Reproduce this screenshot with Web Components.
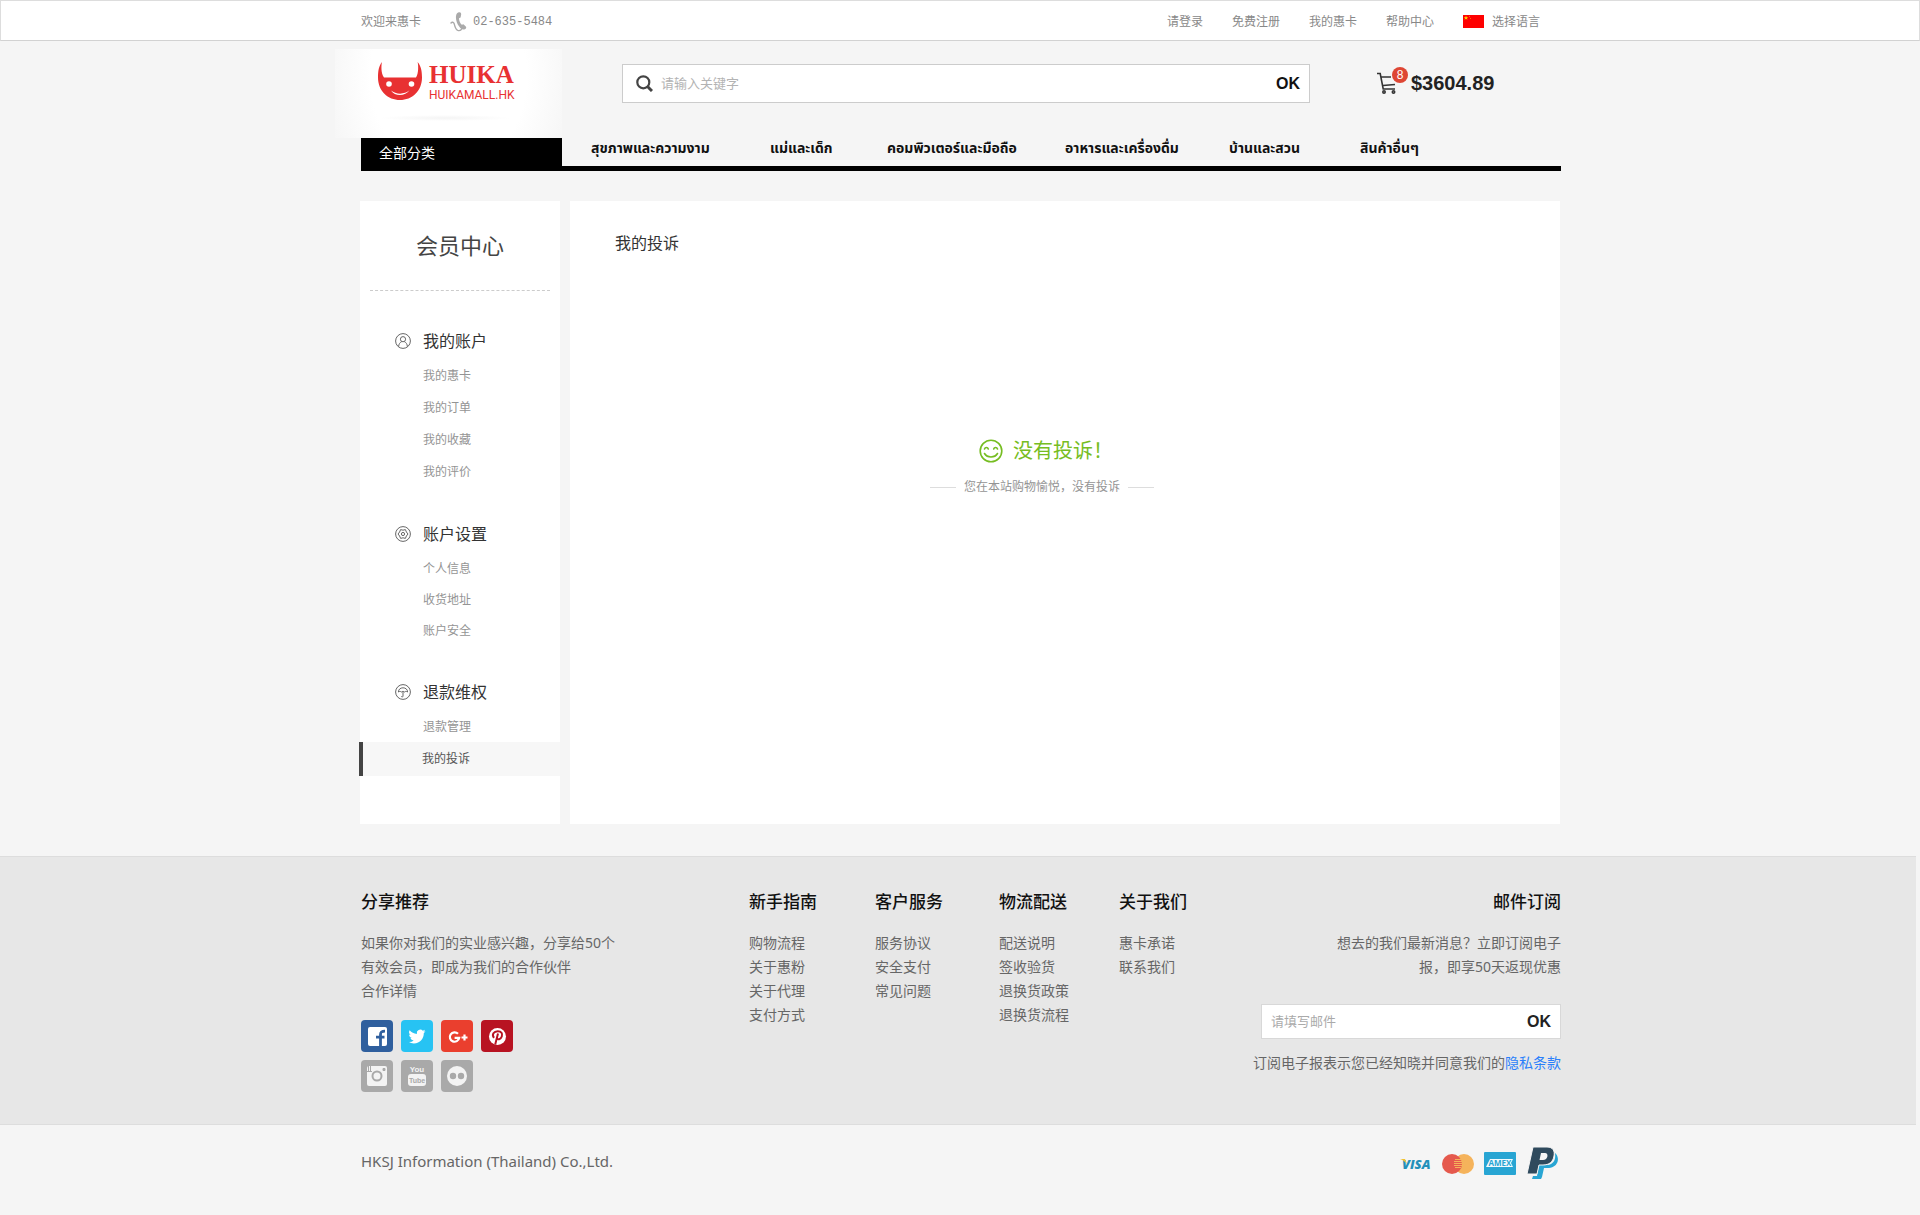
<!DOCTYPE html>
<html lang="zh-CN">
<head>
<meta charset="utf-8">
<meta name="viewport" content="width=device-width, initial-scale=1">
<title>我的投诉 - HUIKA</title>
<style>
  :root {
    --page: #f5f5f5;
    --wrap: 1200px;
    --muted: #949494;
    --text: #666;
    --dark: #333;
    --cjk: "Noto Sans", "Noto Sans CJK SC", sans-serif;
  }
  body { margin: 0; background: var(--page); font: 14px/24px var(--cjk); color: var(--text); }
  a { color: inherit; text-decoration: none; }
</style>
</head>
<body>
<hk-page>
  <hk-topbar slot="top"></hk-topbar>
  <hk-header slot="header"></hk-header>
  <hk-nav slot="header"></hk-nav>

  <hk-side-menu slot="side" heading="会员中心">
    <hk-menu-group heading="我的账户" style="--row:32px">
      <svg slot="icon" viewBox="0 0 16 16"><circle cx="8" cy="8" r="7.4"/><circle cx="8" cy="6.2" r="2.6"/><path d="M3.6 13.6c.2-2.6 1.4-4.2 3-4.9M12.4 13.6c-.2-2.6-1.4-4.2-3-4.9"/></svg>
      <hk-menu-item>我的惠卡</hk-menu-item>
      <hk-menu-item>我的订单</hk-menu-item>
      <hk-menu-item>我的收藏</hk-menu-item>
      <hk-menu-item>我的评价</hk-menu-item>
    </hk-menu-group>
    <hk-menu-group heading="账户设置">
      <svg slot="icon" viewBox="0 0 16 16"><circle cx="8" cy="8" r="7.4"/><path d="M5.6 3.6 8 4.2l2.4-.6 1 2.4L13 8l-1.600 2-1 2.400-2.400-.6-2.400.6-1-2.400L3 8l1.600-2z"/><circle cx="8" cy="8" r="1.600"/></svg>
      <hk-menu-item>个人信息</hk-menu-item>
      <hk-menu-item>收货地址</hk-menu-item>
      <hk-menu-item>账户安全</hk-menu-item>
    </hk-menu-group>
    <hk-menu-group heading="退款维权">
      <svg slot="icon" viewBox="0 0 16 16"><circle cx="8" cy="8" r="7.4"/><path d="M3.400 8c0-2.600 2-4.200 4.600-4.200s4.600 1.600 4.600 4.200c-1.400-.8-2.200-.8-3 0-1-.8-2.200-.8-3.200 0-1-.8-2-.8-3 0zM8 7.600v4.600c0 1-1.600 1-1.600 0"/></svg>
      <hk-menu-item>退款管理</hk-menu-item>
      <hk-menu-item active>我的投诉</hk-menu-item>
    </hk-menu-group>
  </hk-side-menu>

  <hk-panel heading="我的投诉">
    <hk-empty-state>
      <span slot="title">没有投诉！</span>
      您在本站购物愉悦，没有投诉
    </hk-empty-state>
  </hk-panel>

  <hk-footer slot="footer">
    <hk-footer-column heading="分享推荐">
      <p>如果你对我们的实业感兴趣，分享给50个<br>有效会员，即成为我们的合作伙伴<br><a href="#">合作详情</a></p>
      <hk-social></hk-social>
    </hk-footer-column>
    <hk-footer-column heading="新手指南"><a href="#">购物流程</a><a href="#">关于惠粉</a><a href="#">关于代理</a><a href="#">支付方式</a></hk-footer-column>
    <hk-footer-column heading="客户服务"><a href="#">服务协议</a><a href="#">安全支付</a><a href="#">常见问题</a></hk-footer-column>
    <hk-footer-column heading="物流配送"><a href="#">配送说明</a><a href="#">签收验货</a><a href="#">退换货政策</a><a href="#">退换货流程</a></hk-footer-column>
    <hk-footer-column heading="关于我们"><a href="#">惠卡承诺</a><a href="#">联系我们</a></hk-footer-column>
    <hk-footer-column heading="邮件订阅" end>
      <p>想去的我们最新消息？立即订阅电子<br>报，即享50天返现优惠</p>
      <hk-subscribe></hk-subscribe>
    </hk-footer-column>
  </hk-footer>
  <hk-legal slot="footer"></hk-legal>
</hk-page>

<script>
const base = `*{box-sizing:border-box}a{color:inherit;text-decoration:none}button{font:inherit;color:inherit;background:none;border:0;padding:0;cursor:pointer}svg{display:block}`;

function define(name, render) {
  customElements.define(name, class extends HTMLElement {
    constructor() {
      super();
      this.attachShadow({ mode: 'open' });
    }
    connectedCallback() {
      const template = document.createElement('template');
      template.innerHTML = `<style>${base}</style>` + render(this);
      this.shadowRoot.replaceChildren(template.content.cloneNode(true));
    }
  });
}

define('hk-page', () => `
<style>
  :host { display: block; }
  .wrap { max-width: var(--wrap); margin: 0 auto; }
  header { padding-left: 2px; }
  main { padding: 30px 0 32px; }
  .grid { display: grid; grid-template-columns: 200px minmax(0, 1fr); gap: 10px; }
</style>
<slot name="top"></slot>
<header><div class="wrap"><slot name="header"></slot></div></header>
<main><div class="wrap grid"><slot name="side"></slot><slot></slot></div></main>
<footer><slot name="footer"></slot></footer>`);

define('hk-topbar', () => `
<style>
  :host { display: block; background: #fff; border: 1px solid #ddd; border-bottom-color: #d2d2d2; font-size: 12px; color: #888; box-sizing: border-box; height: 41px; padding-left: 2px; }
  .row, .group, nav, .lang { display: flex; align-items: center; }
  .row { max-width: var(--wrap); height: 39px; margin: 0 auto; padding: 2px 21px 0 0; justify-content: space-between; }
  .group { gap: 29px; }
  .phone { display: flex; align-items: center; gap: 6px; font: 12px/24px "Liberation Mono", monospace; }
  nav { gap: 29px; }
  .lang { gap: 8px; }
</style>
<div class="row">
  <div class="group">
    <span>欢迎来惠卡</span>
    <a class="phone" href="tel:026355484">
      <svg width="17" height="20" viewBox="0 0 17 20"><path d="M8.200.6c2-.9 3 .3 3 1.700l-.6 3.100-1.600.8c0 2.600 1 4.800 2.800 6.600l1.600-.6 2.400 2.200c.8 1 .4 2.300-1 2.900-2 .8-4-.3-5.800-3C7 11.500 5.600 7.600 6 4.200c.2-1.800 1-3 2.200-3.600z" fill="#aaa"/><path d="M1 11c1-1.200 2.600-1 3.200.8.6 2.400 1.400 5.600 3.600 6.600 2 .6 3.400-.4 4-1.600" fill="none" stroke="#aaa" stroke-width="1.400" stroke-linecap="round"/></svg>
      <span>02-635-5484</span>
    </a>
  </div>
  <nav>
    <a href="#">请登录</a><a href="#">免费注册</a><a href="#">我的惠卡</a><a href="#">帮助中心</a>
    <button class="lang" type="button">
      <svg width="21" height="13" viewBox="0 0 21 13"><path d="M0 0h21v13H0z" fill="#fe0000"/><path d="m3 .8.6 1.400h1.500L4 3.200l.4 1.500L3 3.800l-1.400.9L2 3.200.9 2.200h1.500z" fill="#fd0"/><path d="M6 1h1v1H6zM7 3h1v1H7z" fill="#f60"/></svg>
      <span>选择语言</span>
    </button>
  </nav>
</div>`);

define('hk-header', () => `
<style>
  :host { display: flex; align-items: flex-start; height: 97px; padding-top: 8px; box-sizing: border-box; }
  hk-logo { margin-left: -26px; }
  hk-search { flex: 1; margin: 15px 67px 0 60px; }
  hk-cart { width: 184px; margin-top: 15px; }
</style>
<hk-logo></hk-logo><hk-search></hk-search><hk-cart></hk-cart>`);

define('hk-logo', () => `
<style>
  :host { display: block; width: 227px; height: 89px; background: radial-gradient(ellipse 130px 160px at 50% 30%, #fff 60%, #f5f5f5 100%); }
  a { display: flex; gap: 7px; padding: 13px 0 0 43px; color: #e83132; }
  .name { display: flex; flex-direction: column; }
  b { font: bold 25px/26px "Liberation Serif", serif; }
  span span { font: 12px/14px Roboto, sans-serif; }
  .shade { width: 130px; height: 6px; margin: 13px 0 0 45px; background: radial-gradient(closest-side, #f4f4f4, #fff0); }
</style>
<a href="#">
  <svg width="44" height="39" viewBox="0 0 44 39"><path fill="#e83132" d="M4 0C.8 4 0 9 0 15.500 0 29 9.800 38 22 38s22-9 22-22.500C44 9 43 4 39.600 0c.8 3 1.200 11-1.600 15.600H6C2.800 11 3.200 3 4 0z"/><circle cx="11" cy="22" r="2.800" fill="#fff"/><circle cx="33.500" cy="22" r="2.800" fill="#fff"/><path d="M13 28.500c5 4.200 13.500 4.200 18.500-.2-4 6-14.500 6.600-18.500.2z" fill="#fff"/></svg>
  <span class="name"><b>HUIKA</b><span>HUIKAMALL.HK</span></span>
</a>
<div class="shade"></div>`);

define('hk-search', () => `
<style>
  :host { display: block; }
  form { display: flex; align-items: center; height: 39px; background: #fff; border: 1px solid #ccc; padding: 0 9px 0 13px; }
  input { flex: 1; min-width: 0; border: 0; outline: 0; padding: 0 0 2px 8px; font: 13px/20px var(--cjk); color: #333; background: none; }
  input::placeholder { color: #b3b3b3; opacity: 1; }
  button { font: bold 16px/24px "Liberation Sans", sans-serif; color: #111; }
</style>
<form onsubmit="return false">
  <svg width="17" height="17" viewBox="0 0 17 17" fill="none" stroke="#444"><circle cx="7.300" cy="7.300" r="6" stroke-width="2.200"/><path d="m11.500 11.500 4.500 4.500" stroke-width="3"/></svg>
  <input type="search" aria-label="搜索" placeholder="请输入关键字">
  <button type="submit">OK</button>
</form>`);

define('hk-cart', () => `
<style>
  :host { display: block; }
  a { display: flex; align-items: center; gap: 14px; height: 37px; color: #222; }
  .icon { position: relative; }
  .badge { position: absolute; left: 15px; top: -5px; width: 16px; height: 16px; border-radius: 50%; background: #de4634; color: #fff; font: 12px/16px "Liberation Sans", sans-serif; text-align: center; }
  strong { font: bold 20px/24px "Liberation Sans", sans-serif; }
</style>
<a href="#" aria-label="购物车">
  <span class="icon">
    <svg width="20" height="22" viewBox="0 0 20 22" fill="none" stroke="#333" stroke-width="1.600"><path d="M0 1.500h3.200l3 15.500H18M4.500 5H14M6 13.500l12-1"/><circle cx="7" cy="20" r="1.200"/><circle cx="16.500" cy="20" r="1.200"/></svg>
    <span class="badge">8</span>
  </span>
  <strong>$3604.89</strong>
</a>`);

define('hk-nav', () => `
<style>
  :host { display: flex; height: 33px; border-bottom: 5px solid #000; box-sizing: border-box; }
  button { display: flex; align-items: flex-start; width: 201px; height: 33px; padding: 3px 18px; background: #000; color: #fff; font: 14px/24px var(--cjk); }
  nav { flex: 1; display: grid; grid-template-columns: 179px 117px 178px 164px 131px auto; padding-left: 29px; color: #111; font: bold 14px/22px "Noto Sans Thai", "Noto Sans", sans-serif; white-space: nowrap; }
</style>
<button type="button">全部分类</button>
<nav><a href="#">สุขภาพและความงาม</a><a href="#">แม่และเด็ก</a><a href="#">คอมพิวเตอร์และมือถือ</a><a href="#">อาหารและเครื่องดื่ม</a><a href="#">บ้านและสวน</a><a href="#">สินค้าอื่นๆ</a></nav>`);

define('hk-side-menu', el => `
<style>
  :host { display: block; background: #fff; padding-bottom: 48px; }
  h2 { margin: 0 10px 31px; height: 90px; border-bottom: 1px dashed #ccc; text-align: center; font: 22px/88px var(--cjk); color: #444; }
  nav { display: flex; flex-direction: column; gap: 27px; }
</style>
<h2>${el.getAttribute('heading')}</h2>
<nav><slot></slot></nav>`);

define('hk-menu-group', el => `
<style>
  :host { display: block; }
  h3 { display: flex; align-items: center; gap: 12px; height: 38px; margin: 0; padding-left: 35px; font: 16px/24px var(--cjk); color: #333; }
  ::slotted(svg) { width: 16px; height: 16px; fill: none; stroke: #666; stroke-width: 1; }
</style>
<h3><slot name="icon"></slot>${el.getAttribute('heading')}</h3>
<slot></slot>`);

define('hk-menu-item', () => `
<style>
  :host { display: block; height: var(--row, 31px); line-height: var(--row, 31px); font-size: 12px; color: var(--muted); }
  :host([active]) { --row: 34px; background: #f7f7f7; color: #555; border-left: 4px solid #444; margin-left: -1px; }
  a { display: block; padding-left: 63px; }
  :host([active]) a { padding-left: 59px; }
</style>
<a href="#"><slot></slot></a>`);

define('hk-panel', el => `
<style>
  :host { display: block; background: #fff; padding: 30px 45px; }
  h1 { margin: 0; font: 16px/24px var(--cjk); color: #333; }
</style>
<h1>${el.getAttribute('heading')}</h1>
<slot></slot>`);

define('hk-empty-state', () => `
<style>
  :host { display: flex; flex-direction: column; align-items: center; margin: 181px 46px 0 0; font-size: 12px; color: var(--muted); }
  .title { display: flex; align-items: center; gap: 10px; padding-left: 8px; font-size: 20px; line-height: 30px; color: #76bd22; }
  .note { display: flex; align-items: center; gap: 8px; margin-top: 9px; }
  .note::before, .note::after { content: ""; width: 26px; border-top: 1px solid #ddd; }
</style>
<div class="title">
  <svg width="24" height="24" viewBox="0 0 24 24" fill="none" stroke="#76bd22" stroke-width="1.600" stroke-linecap="round"><circle cx="12" cy="12" r="10.800"/><path d="M5.500 10c.6-2 3.200-2 3.800 0M14.700 10c.6-2 3.200-2 3.800 0M5.500 14.500c2.800 4.600 10.200 4.600 13 0"/></svg>
  <slot name="title"></slot>
</div>
<div class="note"><span><slot></slot></span></div>`);

define('hk-footer', () => `
<style>
  :host { display: block; margin-right: 4px; background: #e7e7e7; border: solid #ddd; border-width: 1px 0; padding: 33px 0 32px 6px; }
  .cols { display: grid; grid-template-columns: 388px 126px 124px 120px 1fr auto; max-width: var(--wrap); margin: 0 auto; }
</style>
<div class="cols"><slot></slot></div>`);

define('hk-footer-column', el => `
<style>
  :host { display: flex; flex-direction: column; font-size: 14px; line-height: 24px; }
  :host([end]) { text-align: right; }
  h3 { margin: 0 0 17px; font: 500 17px/24px var(--cjk); color: #111; }
  ::slotted(p) { margin: 0 !important; }
</style>
<h3>${el.getAttribute('heading')}</h3>
<slot></slot>`);

define('hk-social', () => `
<style>
  :host { display: grid; grid-template-columns: repeat(4, 32px); gap: 8px; margin-top: 17px; }
  a { border-radius: 4px; overflow: hidden; }
  text { font-family: "Liberation Sans Narrow", "Liberation Sans", sans-serif; font-weight: bold; text-anchor: middle; }
</style>
<a href="#" aria-label="Facebook"><svg width="32" height="32"><path fill="#2f5f9e" d="M0 0h32v32H0z"/><rect x="7" y="7" width="19" height="19" rx="2" fill="#fff"/><path d="M19.500 26V14.500c0-2.500 1-3.300 4.500-3.300M15 17.200h8.500" fill="none" stroke="#2f5f9e" stroke-width="2.800"/></svg></a>
<a href="#" aria-label="Twitter"><svg width="32" height="32"><path fill="#27c3f3" d="M0 0h32v32H0z"/><path transform="translate(7.500 8) scale(.71)" fill="#fff" d="M23.950 4.570a10 10 0 0 1-2.820.78 4.960 4.960 0 0 0 2.160-2.730c-.95.560-2 .96-3.120 1.190a4.920 4.920 0 0 0-8.390 4.480C7.690 8.090 4.070 6.130 1.640 3.160a4.900 4.900 0 0 0 1.520 6.570 4.900 4.900 0 0 1-2.230-.61v.06a4.920 4.920 0 0 0 3.950 4.830 5 5 0 0 1-2.210.08 4.940 4.940 0 0 0 4.600 3.420A9.870 9.870 0 0 1 0 19.540a14 14 0 0 0 7.550 2.210c9.050 0 14-7.500 14-13.980l-.02-.64a9.900 9.900 0 0 0 2.420-2.560z"/></svg></a>
<a href="#" aria-label="Google+"><svg width="32" height="32"><path fill="#ea3f2e" d="M0 0h32v32H0z"/><path d="M17 13.800a4.700 4.700 0 1 0 1.200 4H13.600M20.500 17.500h6M23.500 14.500v6" fill="none" stroke="#fff" stroke-width="2.200"/></svg></a>
<a href="#" aria-label="Pinterest"><svg width="32" height="32"><path fill="#b81322" d="M0 0h32v32H0z"/><circle cx="16.500" cy="16.500" r="8.500" fill="#fff"/><path d="M13 17.800c-2.600-3.300-.2-6.600 3.800-6.600 3.600 0 5 2.500 4 5.300-1 3-4.300 3.600-5 1.500M17 13.500l-2.800 11" fill="none" stroke="#b81322" stroke-width="2"/></svg></a>
<a href="#" aria-label="Instagram"><svg width="32" height="32"><path fill="#a9a9a9" d="M0 0h32v32H0z"/><rect x="6" y="6" width="20" height="20" rx="2" fill="#f3f3f3"/><path d="M7.500 6v5M9.500 6v5" stroke="#a9a9a9"/><path d="M6 11.500h5M22 8.500h2v2h-2z" stroke="#a9a9a9" fill="#a9a9a9"/><circle cx="16" cy="16" r="4.500" fill="none" stroke="#a9a9a9" stroke-width="2"/></svg></a>
<a href="#" aria-label="YouTube"><svg width="32" height="32"><path fill="#a9a9a9" d="M0 0h32v32H0z"/><rect x="7" y="14" width="18" height="12" rx="3" fill="#f3f3f3"/><text x="16" y="12" font-size="8" fill="#f3f3f3">You</text><text x="16" y="23" font-size="7" fill="#a9a9a9">Tube</text></svg></a>
<a href="#" aria-label="Flickr"><svg width="32" height="32"><path fill="#a9a9a9" d="M0 0h32v32H0z"/><circle cx="16" cy="16" r="10" fill="#f3f3f3"/><circle cx="12" cy="16" r="3.200" fill="#a9a9a9"/><circle cx="20" cy="16" r="3.200" fill="#a9a9a9"/></svg></a>`);

define('hk-subscribe', () => `
<style>
  :host { display: flex; flex-direction: column; align-items: flex-end; margin-top: 25px; }
  form { display: flex; align-items: center; width: 300px; height: 35px; background: #fff; border: 1px solid #d8d8d8; padding: 0 9px; }
  input { flex: 1; min-width: 0; border: 0; outline: 0; padding: 0 0 2px; font: 13px/20px var(--cjk); background: none; }
  input::placeholder { color: #aaa; opacity: 1; }
  button { font: bold 16px/24px "Liberation Sans", sans-serif; color: #222; }
  p { margin: 12px 0 0; }
  p a { color: #2a7ffb; }
</style>
<form onsubmit="return false">
  <input type="email" aria-label="邮件" placeholder="请填写邮件">
  <button type="submit">OK</button>
</form>
<p>订阅电子报表示您已经知晓并同意我们的<a href="#">隐私条款</a></p>`);

define('hk-legal', () => `
<style>
  :host { display: block; }
  .row { display: flex; justify-content: space-between; align-items: flex-start; max-width: var(--wrap); margin: 0 auto; padding: 22px 0; font-size: 15px; }
  .row > span { padding: 2px 0 0 1px; }
  .cards { display: flex; align-items: center; gap: 10px; }
  text { font-family: "Open Sans", sans-serif; font-weight: bold; }
</style>
<div class="row">
<span>HKSJ Information (Thailand) Co.,Ltd.</span>
<div class="cards">
  <svg width="32" height="18" viewBox="0 0 32 18"><text x="2" y="14" font-size="13" font-style="italic" style="font-weight:800" fill="#2390ba">VISA</text><path d="M0 4h5l2 5C5 6.500 3 5 0 4z" fill="#f0c230"/></svg>
  <svg width="32" height="20" viewBox="0 0 32 20"><circle cx="22" cy="10" r="10" fill="#f5b35b"/><circle cx="10" cy="10" r="10" fill="#e5594d"/><path d="M13 5.500h6M12 7.500h8M12 9.500h8M12 11.500h8M13 13.500h6" stroke="#f5b35b"/></svg>
  <svg width="32" height="23" viewBox="0 0 32 23"><rect width="32" height="23" rx="1" fill="#28a5d3"/><path d="M6 7h23l-2 4 2 4H2z" fill="#f2fafd"/><text x="16" y="14" font-size="8" text-anchor="middle" fill="#28a5d3">AMEX</text></svg>
  <svg width="34" height="33" viewBox="0 0 34 33"><path d="M29 6c5 4 4 14-6 15h-5l-2 9-1 2H6l1-3h4l2-11h9c6-1 8-6 7-12z" fill="#28a5d3"/><path d="M7 0h14c6 0 8 4 7 9-1 6-5 9-11 9h-4l-2 9H1z" fill="#2f4a5d" stroke="#f5f5f5"/><path d="M15 6h4c4 0 3 7-2 7h-3.500z" fill="#f5f5f5"/></svg>
</div>
</div>`);
</script>
</body>
</html>
